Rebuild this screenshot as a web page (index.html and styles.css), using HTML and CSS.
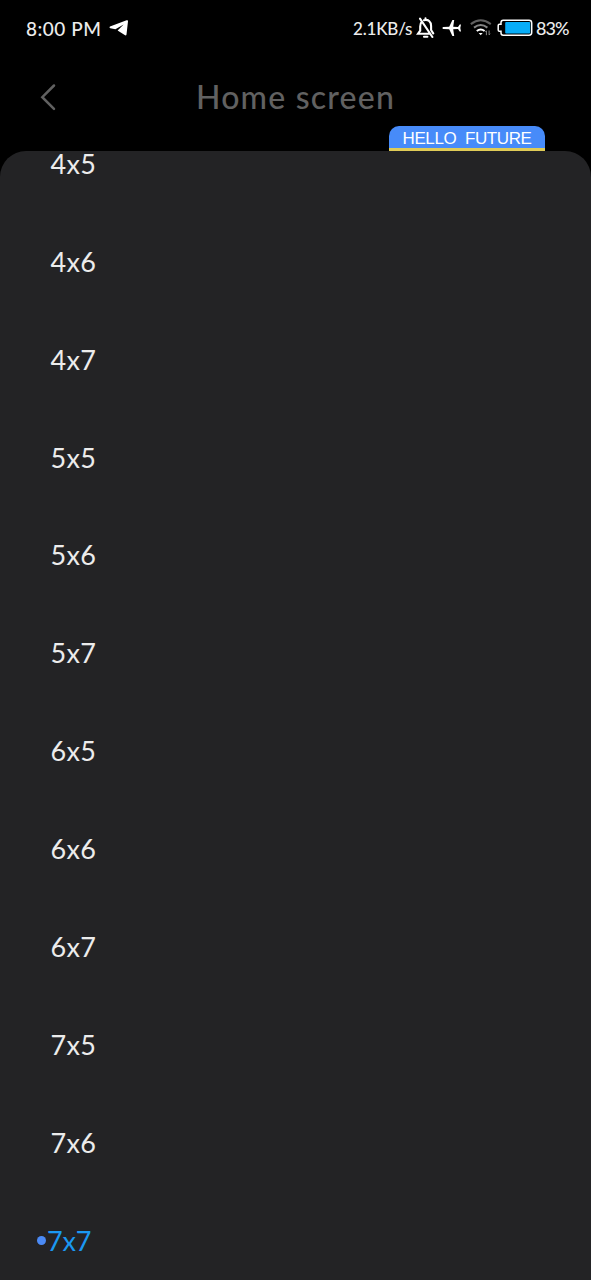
FILE: index.html
```html
<!DOCTYPE html>
<html lang="en">

<head>
    <meta charset="UTF-8">
    <meta name="viewport" content="width=device-width, initial-scale=1.0">
    <title>Home screen</title>
    <link rel="stylesheet" href="styles.css">
</head>

<body>
    <div class="status-bar">
        <span class="clock">8:00 PM</span>
        <svg class="icon-telegram" width="20" height="18" viewBox="0 0 20 18">
            <path d="M1 7.5 17.6 1.3Q19.2.9 19 2.2L17.5 15.4Q17.2 17 15.7 16.1L8.6 11.6 14.6 5.4 6.4 10.3 1.3 9.2Q-.2 8.4 1 7.5Z" fill="#fff" />
        </svg>
        <span class="speed">2.1KB/s</span>
        <svg class="icon-bell" width="20" height="22" viewBox="0 0 20 22" fill="none" stroke="#fff" stroke-width="2.1" stroke-linecap="round">
            <path d="M5.6 5C4.5 6.2 4.2 7.4 4.2 9.5V13.6L2 16.7H14M8 3.2C12.2 2 15.1 4.8 15.1 9V13L17.2 16.4M9.5 1.4V3M8 19.8H11.4M4 1.6 16.4 20" />
        </svg>
        <svg class="icon-plane" width="20" height="18" viewBox="0 0 20 18">
            <path d="M1.2 8.1 7.2 7.8 10.4 1H12.2L11.2 7.8 16 7.9 17.7 5.4H19L18.3 9 19 12.6H17.7L16 10.1 11.2 10.2 12.2 17H10.4L7.2 10.2 1.2 9.9Q-.4 9 1.2 8.1Z" fill="#fff" />
        </svg>
        <svg class="icon-wifi" width="22" height="18" viewBox="0 0 22 18" fill="none" stroke-width="2">
            <path d="M.8 5.1Q10.7-2.5 20.8 5.1" stroke="#606060" />
            <path d="M4 8.6Q10.7 3.6 17.4 8.6" stroke="#858585" />
            <path d="M6.8 12.1Q10.7 8.8 14.6 12.1" stroke="#fff" />
            <path d="M8.7 14H12.7L10.7 16.3Z" fill="#fff" />
            <path d="M16.4 16.2V11.8L15.4 13M19.1 11.5V15.9L20.1 14.7" stroke="#888" stroke-width="1" />
        </svg>
        <svg class="icon-battery" width="36" height="18" viewBox="0 0 36 18">
            <path d="M6.2 1.3H32Q34.7 1.3 34.7 4V13.5Q34.7 16.2 32 16.2H6.2Q4 16.2 4 14V12.3H2.4Q1.2 12.3 1.2 11V6.5Q1.2 5.2 2.4 5.2H4V3.5Q4 1.3 6.2 1.3Z" fill="none" stroke="#fff" stroke-width="1.5" />
            <rect x="8.2" y="3.1" width="25" height="11.4" rx="1" fill="#08adf8" />
        </svg>
        <span class="percent">83%</span>
    </div>

    <header class="header">
        <svg class="back" width="16" height="28" viewBox="0 0 16 28">
            <path d="M14 2.5 2.3 14.2 14 25.8" fill="none" stroke="#616161" stroke-width="2.5" stroke-linecap="round" />
        </svg>
        <h1 class="title">Home screen</h1>
    </header>

    <div class="badge-row">
        <span class="badge">HELLO&nbsp; FUTURE</span>
    </div>

    <main class="sheet">
        <ul class="options">
            <li class="option">4x5</li>
            <li class="option">4x6</li>
            <li class="option">4x7</li>
            <li class="option">5x5</li>
            <li class="option">5x6</li>
            <li class="option">5x7</li>
            <li class="option">6x5</li>
            <li class="option">6x6</li>
            <li class="option">6x7</li>
            <li class="option">7x5</li>
            <li class="option">7x6</li>
            <li class="option selected">7x7</li>
        </ul>
    </main>
</body>

</html>
```

FILE: styles.css
```css
* {
    box-sizing: border-box;
    margin: 0;
    padding: 0;
}

body {
    display: flex;
    flex-direction: column;
    height: 1280px;
    overflow: hidden;
    background-color: #000;
    color: #ececec;
    font-family: Lato, sans-serif;
}

.status-bar {
    display: flex;
    align-items: center;
    height: 56px;
    padding-left: 26px;
    font-weight: 500;
    white-space: nowrap;
}

.status-bar svg {
    flex: none;
}

.clock {
    width: 75px;
    font-size: 19px;
    letter-spacing: 0.5px;
}

.icon-telegram {
    margin-left: 8px;
}

.speed {
    width: 60px;
    margin-left: 224px;
    font-size: 17px;
    letter-spacing: -0.2px;
}

.icon-bell {
    margin-left: 3px;
}

.icon-plane {
    margin-left: 6px;
}

.icon-wifi {
    margin-left: 8px;
}

.icon-battery {
    margin-left: 5px;
}

.percent {
    margin-left: 3px;
    font-size: 18px;
    letter-spacing: -0.9px;
}

.header {
    display: flex;
    align-items: center;
    height: 70px;
    padding: 11px 40px 0;
}

.back {
    flex: none;
}

.title {
    margin-left: 140px;
    color: #616161;
    font-size: 32px;
    font-weight: 500;
    line-height: 40px;
    letter-spacing: 1.2px;
    white-space: nowrap;
}

.badge-row {
    display: flex;
    justify-content: flex-end;
    height: 25px;
    padding-right: 46px;
}

.badge {
    width: 156px;
    height: 25px;
    border-bottom: 3px solid #dfcb57;
    border-radius: 10px 10px 0 0;
    background-color: #478bf9;
    color: #fff;
    font-family: "Liberation Sans", sans-serif;
    font-size: 17px;
    line-height: 25px;
    letter-spacing: -0.4px;
    text-align: center;
    white-space: nowrap;
}

.sheet {
    flex: 1;
    min-height: 0;
    overflow: hidden;
    border-radius: 26px 26px 0 0;
    background-color: #232325;
}

.options {
    margin-top: -36.1px;
    list-style: none;
}

.option {
    display: flex;
    align-items: center;
    height: 97.9px;
    padding-left: 50.5px;
    font-size: 27px;
    line-height: 32px;
    letter-spacing: 0.3px;
}

.selected {
    padding-left: 37px;
    color: #1b98f2;
    letter-spacing: -0.2px;
}

.selected::before {
    content: '';
    width: 9px;
    height: 9px;
    margin-right: 1px;
    border-radius: 50%;
    background-color: #4b8af5;
}
```
